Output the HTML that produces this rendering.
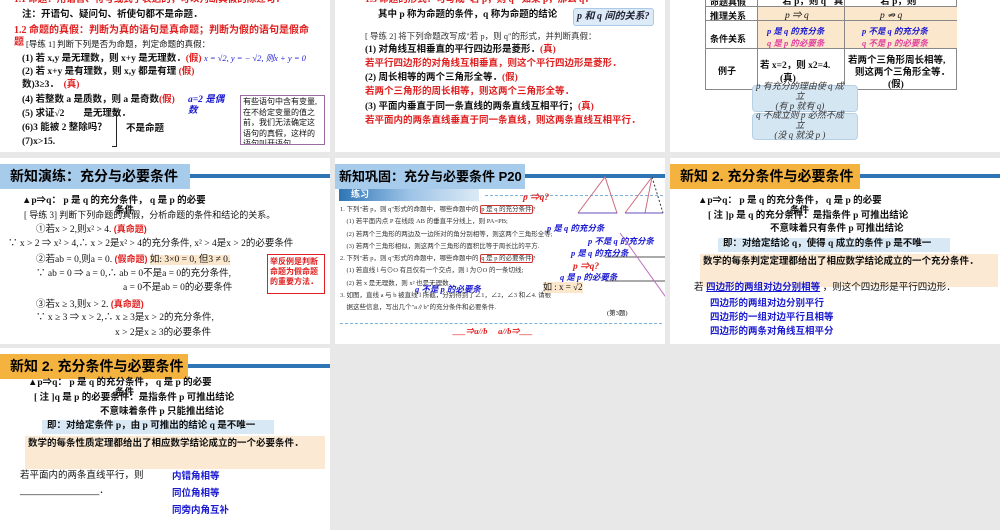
<!DOCTYPE html>
<html><head><meta charset="utf-8"><style>
body{margin:0;width:1000px;height:530px;background:#e8e8e8;position:relative;overflow:hidden;font-family:"Liberation Serif","Noto Sans CJK SC",serif;}
.s{position:absolute;background:#fff;overflow:hidden}
.t{position:absolute;white-space:nowrap;font-size:9.5px;color:#111;line-height:1.2}
.b{font-weight:bold}
.r{color:#e02020}
.bl{color:#1a1ad0}
.i{font-style:italic}
.sans{font-family:"Liberation Sans","Noto Sans CJK SC",sans-serif}
.hd{position:absolute;left:0;top:6px;height:25px;font:bold 14px "Liberation Sans","Noto Sans CJK SC",sans-serif;line-height:25px;padding-left:10px;box-sizing:border-box;white-space:nowrap;overflow:hidden}
.ln{position:absolute;top:16px;height:4px;background:#2e75b6;right:0}
</style></head><body>

<!-- slide 1 -->
<div class="s" style="left:0;top:0;width:330px;height:152px">
<div class="t b r" style="left:14px;top:-5px">1.1 命题：用语言、符号或式子表达的，可以判断真假的陈述句．</div>
<div class="t b" style="left:22px;top:10px">注：开语句、疑问句、祈使句都不是命题．</div>
<div class="t b r" style="left:14px;top:25px;font-size:10px">1.2 命题的真假：判断为真的语句是真命题；判断为假的语句是假命</div>
<div class="t b r" style="left:14px;top:37px;font-size:10px">题</div>
<div class="t" style="left:26px;top:39px;font-size:8.5px">[导练 1] 判断下列是否为命题，判定命题的真假：</div>
<div class="t b" style="left:22px;top:53px">(1) 若 x,y 是无理数，则 x+y 是无理数．<span class="r">(假)</span> <span class="bl i" style="font-weight:normal;font-size:8.5px">x = √2, y = − √2, 则x + y = 0</span></div>
<div class="t b" style="left:22px;top:67px">(2) 若 x+y 是有理数，则 x,y 都是有理 <span class="r">(假)</span></div>
<div class="t b" style="left:22px;top:80px">数)3≥3．　<span class="r">(真)</span></div>
<div class="t b" style="left:22px;top:95px">(4) 若整数 a 是质数，则 a 是奇数<span class="r">(假)</span></div>
<div class="t b bl i" style="left:188px;top:95px">a=2 是偶<br>数</div>
<div class="t b" style="left:22px;top:109px">(5) 求证√2　　是无理数．</div>
<div class="t b" style="left:22px;top:123px">(6)3 能被 2 整除吗？</div>
<div class="t b" style="left:126px;top:124px">不是命题</div>
<div style="position:absolute;left:112px;top:111px;width:4px;height:34px;border:1px solid #222;border-left:none"></div>
<div class="t b" style="left:22px;top:137px">(7)x&gt;15.</div>
<div class="t" style="left:240px;top:95px;width:85px;height:50px;border:1px solid #9a6aa0;font-size:8px;line-height:10.5px;padding:1px 2px;box-sizing:border-box;white-space:normal;overflow:hidden">有些语句中含有变量,在不给定变量的值之前，我们无法确定这语句的真假，这样的语句叫开语句．</div>
</div>

<!-- slide 2 -->
<div class="s" style="left:335px;top:0;width:330px;height:152px">
<div class="t b r" style="left:30px;top:-5px">1.3 命题的形式：可写成"若 p，则 q" 如果 p，那么 q．</div>
<div class="t b" style="left:43px;top:10px">其中 p 称为命题的条件，q 称为命题的结论</div>
<div class="t b i" style="left:238px;top:8px;background:#dcebf7;border:1px solid #a9c9e6;border-radius:3px;padding:2px 3px;font-size:10px;color:#223">p 和 q 间的关系?</div>
<div class="t" style="left:30px;top:31px;font-size:8.5px;color:#333">[ 导练 2] 将下列命题改写成"若 p，则 q"的形式，并判断真假：</div>
<div class="t b" style="left:30px;top:45px">(1) 对角线互相垂直的平行四边形是菱形．<span class="r">(真)</span></div>
<div class="t b r" style="left:30px;top:59px">若平行四边形的对角线互相垂直，则这个平行四边形是菱形．</div>
<div class="t b" style="left:30px;top:73px">(2) 周长相等的两个三角形全等．<span class="r">(假)</span></div>
<div class="t b r" style="left:30px;top:87px">若两个三角形的周长相等，则这两个三角形全等．</div>
<div class="t b" style="left:30px;top:102px">(3) 平面内垂直于同一条直线的两条直线互相平行；<span class="r">(真)</span></div>
<div class="t b r" style="left:30px;top:116px">若平面内的两条直线垂直于同一条直线，则这两条直线互相平行．</div>
</div>

<!-- slide 3 -->
<div class="s" style="left:670px;top:0;width:330px;height:152px">
<div style="position:absolute;left:35px;top:-5px;width:252px;height:95px">
<div style="position:absolute;left:0;top:0;width:252px;height:95px;border:1px solid #888;box-sizing:border-box"></div>
<div style="position:absolute;left:52px;top:11px;width:200px;height:42px;background:#fbe7cc"></div>
<div style="position:absolute;left:0;top:11px;width:252px;border-top:1px solid #888"></div>
<div style="position:absolute;left:0;top:25px;width:252px;border-top:1px solid #888"></div>
<div style="position:absolute;left:0;top:53px;width:252px;border-top:1px solid #888"></div>
<div style="position:absolute;left:52px;top:0;height:95px;border-left:1px solid #888"></div>
<div style="position:absolute;left:139px;top:0;height:95px;border-left:1px solid #888"></div>
</div>
<div class="t b sans" style="left:40px;top:-3px;font-size:9px">命题真假</div>
<div class="t b" style="left:107px;top:-3px">"若 p，则 q" 真</div>
<div class="t b" style="left:205px;top:-3px">"若 p，则</div>
<div class="t b sans" style="left:40px;top:11px;font-size:9px">推理关系</div>
<div class="t i" style="left:115px;top:11px">p ⇒ q</div>
<div class="t i" style="left:210px;top:11px">p ⇏ q</div>
<div class="t b sans" style="left:40px;top:34px;font-size:9px">条件关系</div>
<div class="t b i bl" style="left:97px;top:26px;font-size:8.5px">p 是 q 的充分条</div>
<div class="t b i" style="left:97px;top:38px;font-size:8.5px;color:#e040a0">q 是 p 的必要条</div>
<div class="t b i bl" style="left:192px;top:26px;font-size:8.5px">p 不是 q 的充分条</div>
<div class="t b i" style="left:192px;top:38px;font-size:8.5px;color:#e040a0">q 不是 p 的必要条</div>
<div class="t b sans" style="left:48px;top:66px;font-size:9px">例子</div>
<div class="t b" style="left:90px;top:61px">若 x=2，则 x2=4.</div>
<div class="t b" style="left:110px;top:74px">(真)</div>
<div class="t b" style="left:178px;top:56px">若两个三角形周长相等,</div>
<div class="t b" style="left:185px;top:68px">则这两个三角形全等．</div>
<div class="t b" style="left:218px;top:80px">(假)</div>
<div style="position:absolute;left:82px;top:85px;width:104px;height:25px;background:#d5e6f3;border:1px solid #b8d0e6;border-radius:4px"></div>
<div style="position:absolute;left:82px;top:113px;width:104px;height:25px;background:#d5e6f3;border:1px solid #b8d0e6;border-radius:4px"></div>
<div class="t i" style="left:86px;top:81px;font-size:9px;color:#333;text-align:center;line-height:10px">p 有充分的理由使 q 成<br>立<br>(有 p 就有 q)</div>
<div class="t i" style="left:86px;top:110px;font-size:9px;color:#333;text-align:center;line-height:10px">q 不成立则 p 必然不成<br>立<br>(没 q 就没 p )</div>
</div>

<!-- row 2 slide 1 -->
<div class="s" style="left:0;top:158px;width:330px;height:186px">
<div class="hd" style="width:190px;background:#a7cbea">新知演练：充分与必要条件</div>
<div class="ln" style="left:190px"></div>
<div class="t b" style="left:22px;top:38px">▲p⇒q： p 是 q 的充分条件， q 是 p 的必要</div>
<div class="t b" style="left:115px;top:48px">条件</div>
<div class="t" style="left:24px;top:52px;font-size:9px">[ 导练 3] 判断下列命题的真假，分析命题的条件和结论的关系。</div>
<div class="t" style="left:36px;top:66px">①若x &gt; 2,则x² &gt; 4. <span class="b r sans" style="font-size:9px">(真命题)</span></div>
<div class="t" style="left:8px;top:81px">∵ x &gt; 2 ⇒ x² &gt; 4,∴ x &gt; 2是x² &gt; 4的充分条件, x² &gt; 4是x &gt; 2的必要条件</div>
<div class="t" style="left:36px;top:96px">②若ab = 0,则a = 0. <span class="b r sans" style="font-size:9px">(假命题)</span> <span style="background:#fbe7cc">如: 3×0 = 0, 但3 ≠ 0.</span></div>
<div class="t" style="left:36px;top:111px">∵ ab = 0 ⇒ a = 0,∴ ab = 0不是a = 0的充分条件,</div>
<div class="t" style="left:123px;top:125px">a = 0不是ab = 0的必要条件</div>
<div class="t" style="left:36px;top:141px">③若x ≥ 3,则x &gt; 2. <span class="b r sans" style="font-size:9px">(真命题)</span></div>
<div class="t" style="left:36px;top:155px">∵ x ≥ 3 ⇒ x &gt; 2,∴ x ≥ 3是x &gt; 2的充分条件,</div>
<div class="t" style="left:115px;top:170px">x &gt; 2是x ≥ 3的必要条件</div>
<div class="t b r sans" style="left:267px;top:96px;width:58px;height:40px;border:1px solid #e02020;font-size:8px;line-height:10px;padding:2px;box-sizing:border-box;white-space:normal">举反例是判断命题为假命题的重要方法．</div>
</div>

<!-- row 2 slide 2 -->
<div class="s" style="left:335px;top:158px;width:330px;height:186px">
<div class="hd" style="width:190px;background:#a7cbea;padding-left:4px;font-size:13px">新知巩固：充分与必要条件 P20</div>
<div class="ln" style="left:190px"></div>
<div style="position:absolute;left:4px;top:31px;width:140px;height:12px;background:linear-gradient(90deg,#2e75b6,#9dc3e6,#dceaf6)"></div>
<div class="t b" style="left:16px;top:31px;color:#fff;font-size:9px">练习</div>
<div style="position:absolute;left:150px;top:37px;width:178px;border-top:1px dashed #7fb0d8"></div>
<div class="t" style="left:5px;top:46px;font-size:6.5px;line-height:12.3px;color:#333">1. 下列"若 p，则 q"形式的命题中，哪些命题中的 <span style="border:1px solid #c33;border-radius:2px">p 是 q 的充分条件</span>?<br>　(1) 若平面内点 P 在线段 AB 的垂直平分线上，则 PA=PB;<br>　(2) 若两个三角形的两边及一边所对的角分别相等，则这两个三角形全等;<br>　(3) 若两个三角形相似，则这两个三角形的面积比等于周长比的平方.<br>2. 下列"若 p，则 q"形式的命题中，哪些命题中的 <span style="border:1px solid #c33;border-radius:2px">q 是 p 的必要条件</span>?<br>　(1) 若直线 l 与⊙O 有且仅有一个交点，则 l 为⊙O 的一条切线;<br>　(2) 若 x 是无理数，则 x² 也是无理数.<br>3. 如图，直线 a 与 b 被直线 l 所截，分别得到了∠1，∠2，∠3 和∠4. 请根<br>　据这些信息，写出几个"a∥b"的充分条件和必要条件.</div>
<div class="t b i r" style="left:188px;top:35px">p ⇒q?</div>
<div class="t b i bl" style="left:212px;top:65px;font-size:8.5px">p 是 q 的充分条</div>
<div class="t b i bl" style="left:253px;top:78px;font-size:8.5px">p 不是 q 的充分条</div>
<div class="t b i bl" style="left:236px;top:90px;font-size:8.5px">p 是 q 的充分条</div>
<div class="t b i r" style="left:238px;top:104px">p ⇒q?</div>
<div class="t b i bl" style="left:225px;top:114px;font-size:8.5px">q 是 p 的必要条</div>
<div class="t b i bl" style="left:80px;top:126px;font-size:8.5px">q 不是 p 的必要条</div>
<div class="t" style="left:208px;top:124px;background:#fbe7cc;font-size:9px">如 : x = √2</div>
<div class="t" style="left:272px;top:152px;font-size:6.5px">(第3题)</div>
<div style="position:absolute;left:5px;top:165px;width:322px;border-top:1px dashed #7fb0d8"></div>
<div class="t b i r" style="left:118px;top:168px;font-size:8.5px">___⇒a//b　 a//b⇒___</div>
<svg style="position:absolute;left:240px;top:15px" width="90" height="130">
<polyline points="3,40 30,4 42,40 3,40" fill="none" stroke="#d06a80" stroke-width="1"/>
<line x1="3" y1="40" x2="42" y2="40" stroke="#6a4fc0"/>
<polyline points="50,40 77,4 70,40 50,40" fill="none" stroke="#d06a80"/>
<line x1="77" y1="4" x2="88" y2="40" stroke="#333" stroke-dasharray="2,2"/>
<line x1="50" y1="40" x2="88" y2="40" stroke="#6a4fc0"/>
<line x1="30" y1="84" x2="90" y2="84" stroke="#555"/>
<line x1="30" y1="108" x2="90" y2="108" stroke="#555"/>
<line x1="45" y1="60" x2="95" y2="130" stroke="#c070c0"/>
</svg>
</div>

<!-- row 2 slide 3 -->
<div class="s" style="left:670px;top:158px;width:330px;height:186px">
<div class="hd" style="width:190px;background:#f4b23f">新知 2. 充分条件与必要条件</div>
<div class="ln" style="left:190px"></div>
<div class="t b" style="left:28px;top:38px">▲p⇒q： p 是 q 的充分条件， q 是 p 的必要</div>
<div class="t b" style="left:120px;top:48px">条件</div>
<div class="t b" style="left:38px;top:53px">[ 注 ]p 是 q 的充分条件：是指条件 p 可推出结论</div>
<div class="t b" style="left:100px;top:66px">不意味着只有条件 p 可推出结论</div>
<div style="position:absolute;left:48px;top:80px;width:232px;height:14px;background:#d8e8f5"></div>
<div class="t b" style="left:53px;top:81px">即：对给定结论 q，使得 q 成立的条件 p 是不唯一</div>
<div style="position:absolute;left:30px;top:96px;width:298px;height:33px;background:#fbe9d3"></div>
<div class="t b" style="left:33px;top:99px">数学的每条判定定理都给出了相应数学结论成立的一个充分条件．</div>
<div class="t sans" style="left:24px;top:124px;font-size:9.5px">若 <span class="b bl" style="text-decoration:underline">四边形的两组对边分别相等</span> ，则这个四边形是平行四边形．</div>
<div class="t b bl sans" style="left:40px;top:139px;line-height:14px">四边形的两组对边分别平行<br>四边形的一组对边平行且相等<br>四边形的两条对角线互相平分</div>
</div>

<!-- row 3 slide 1 -->
<div class="s" style="left:0;top:348px;width:330px;height:182px">
<div class="hd" style="width:188px;background:#f4b23f">新知 2. 充分条件与必要条件</div>
<div class="ln" style="left:188px"></div>
<div class="t b" style="left:28px;top:30px">▲p⇒q： p 是 q 的充分条件， q 是 p 的必要</div>
<div class="t b" style="left:115px;top:40px">条件</div>
<div class="t b" style="left:34px;top:45px">[ 注 ]q 是 p 的必要条件：是指条件 p 可推出结论</div>
<div class="t b" style="left:100px;top:59px">不意味着条件 p 只能推出结论</div>
<div style="position:absolute;left:42px;top:72px;width:232px;height:14px;background:#d8e8f5"></div>
<div class="t b" style="left:47px;top:73px">即：对给定条件 p，由 p 可推出的结论 q 是不唯一</div>
<div style="position:absolute;left:25px;top:88px;width:300px;height:33px;background:#fbe9d3"></div>
<div class="t b" style="left:28px;top:91px">数学的每条性质定理都给出了相应数学结论成立的一个必要条件．</div>
<div class="t sans" style="left:20px;top:122px">若平面内的两条直线平行，则</div>
<div class="t sans" style="left:20px;top:137px">_______________．</div>
<div class="t b bl sans" style="left:172px;top:120px;line-height:17px">内错角相等<br>同位角相等<br>同旁内角互补</div>
</div>
</body></html>
